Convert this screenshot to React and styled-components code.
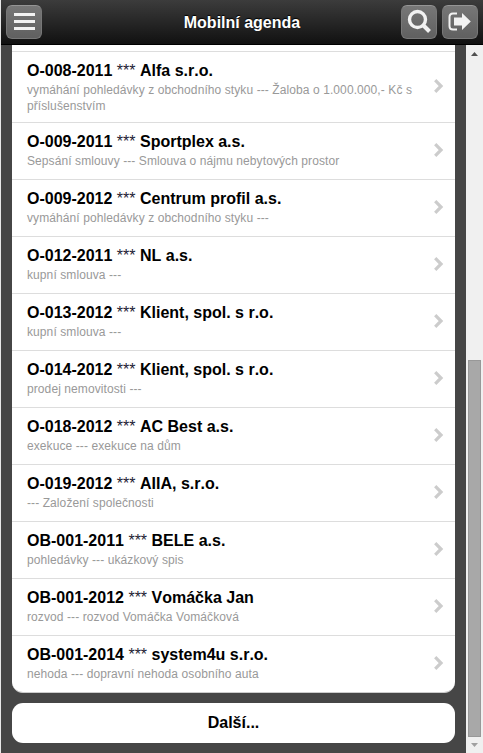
import React from 'react'
import styled, { createGlobalStyle } from 'styled-components';

const GlobalStyle = createGlobalStyle`
*{box-sizing:border-box;}
body{
  margin:0;
  background:#e8e8e8;
  font-family:"Liberation Sans", Arial, sans-serif;
}
`;

const Page = styled.div`
height:753px;
display:flex;
flex-direction:column;
overflow:hidden;
margin-left:1px;
`;

const Header = styled.header`
height:45px;
flex:none;
display:flex;
align-items:flex-start;
gap:5px;
padding:5px;
background:linear-gradient(#3c3c3c, #111);
border-bottom:1px solid #000;
`;

const Title = styled.h1`
flex:1;
margin:0;
padding-left:41px;
text-align:center;
color:#fff;
font-size:16px;
line-height:35px;
text-shadow:0 -1px 1px #000;
`;

const IconButton = styled.button`
width:36px;
height:34px;
padding:0;
border:1px solid #777;
border-top-color:#959595;
border-radius:6px;
background:linear-gradient(#777, #606060);
svg{display:block;}
`;

const Body = styled.div`
flex:1;
min-height:0;
display:flex;
`;

const Content = styled.main`
width:465px;
padding:0 11px;
background:#464646;
`;

const List = styled.ul`
margin:0;
padding:6px 0 0;
list-style:none;
background:#fff;
border-bottom:1px solid #ccc;
border-radius:0 0 11px 11px;
`;

const Row = styled.li`
height:${(p) => (p.$tall ? 71 : 57)}px;
display:flex;
align-items:center;
border-top:1px solid #ddd;
padding:0 10px 0 15px;
svg{margin-bottom:2px;}
`;

const RowText = styled.div`
flex:1;
align-self:flex-start;
padding-top:10px;
`;

const Name = styled.h3`
margin:0;
font-size:16px;
line-height:18px;
font-kerning:none;
color:#000;
white-space:pre;
`;

const Stars = styled.span`
font-weight:normal;
color:#223;
`;

const Note = styled.p`
margin:2px 0 0;
font-size:12px;
line-height:16px;
letter-spacing:0.09px;
color:#999;
white-space:pre;
`;

const More = styled.button`
display:block;
width:100%;
height:40px;
margin-top:10px;
padding:0;
border:0;
border-radius:11px;
background:#fff;
color:#000;
font:bold 16px "Liberation Sans", Arial, sans-serif;
`;

const Scrollbar = styled.div`
width:17px;
padding:0 2px;
display:flex;
flex-direction:column;
background:#f0f0f0;
svg{display:block; flex:none;}
`;

const Track = styled.div`
flex:1;
padding-top:298px;
`;

const Thumb = styled.div`
height:377px;
background:#a8a8a8;
border:1px solid #989898;
`;

const items = [
  { id: 'O-008-2011', name: 'Alfa s.r.o.', note: 'vymáhání pohledávky z obchodního styku --- Žaloba o 1.000.000,- Kč s\npříslušenstvím', tall: true },
  { id: 'O-009-2011', name: 'Sportplex a.s.', note: 'Sepsání smlouvy --- Smlouva o nájmu nebytových prostor' },
  { id: 'O-009-2012', name: 'Centrum profil a.s.', note: 'vymáhání pohledávky z obchodního styku ---' },
  { id: 'O-012-2011', name: 'NL a.s.', note: 'kupní smlouva ---' },
  { id: 'O-013-2012', name: 'Klient, spol. s r.o.', note: 'kupní smlouva ---' },
  { id: 'O-014-2012', name: 'Klient, spol. s r.o.', note: 'prodej nemovitosti ---' },
  { id: 'O-018-2012', name: 'AC Best a.s.', note: 'exekuce --- exekuce na dům' },
  { id: 'O-019-2012', name: 'AIIA, s.r.o.', note: '--- Založení společnosti' },
  { id: 'OB-001-2011', name: 'BELE a.s.', note: 'pohledávky --- ukázkový spis' },
  { id: 'OB-001-2012', name: 'Vomáčka Jan', note: 'rozvod --- rozvod Vomáčka Vomáčková' },
  { id: 'OB-001-2014', name: 'system4u s.r.o.', note: 'nehoda --- dopravní nehoda osobního auta' },
];

const Chevron = () => (
  <svg width="12" height="16" viewBox="0 0 12 16" fill="none" stroke="#ccc" strokeWidth="3.2">
    <path d="M2.2 2.2 8 8l-5.8 5.8" />
  </svg>
);

const App = () => {
  return (
    <>
      <GlobalStyle />
      <Page>
        <Header>
          <IconButton aria-label="Menu">
            <svg width="34" height="32" viewBox="0 0 34 32" fill="#f2f2f2">
              <rect x="7" y="7" width="21" height="3" />
              <rect x="7" y="14" width="21" height="3" />
              <rect x="7" y="21" width="21" height="3" />
            </svg>
          </IconButton>
          <Title>Mobilní agenda</Title>
          <IconButton aria-label="Hledat">
            <svg width="34" height="32" viewBox="0 0 34 32" fill="none" stroke="#f2f2f2">
              <circle cx="15.5" cy="13.5" r="8" strokeWidth="3.4" />
              <path d="m21 19 6.500 6.500" strokeWidth="4" />
            </svg>
          </IconButton>
          <IconButton aria-label="Odhlásit">
            <svg width="34" height="32" viewBox="0 0 34 32" fill="none">
              <path d="M14 7.500h-4Q6.500 7.500 6.500 11v9q0 3.500 3.500 3.500h4" stroke="#f2f2f2" strokeWidth="2" />
              <path d="M11 11.500h8V7l8.800 8.500L19 24v-4.500h-8z" fill="#f2f2f2" />
            </svg>
          </IconButton>
        </Header>
        <Body>
          <Content>
            <List>
              {items.map((item) => (
                <Row key={item.id} $tall={item.tall}>
                  <RowText>
                    <Name>{item.id} <Stars>***</Stars> {item.name}</Name>
                    <Note>{item.note}</Note>
                  </RowText>
                  <Chevron />
                </Row>
              ))}
            </List>
            <More>Další...</More>
          </Content>
          <Scrollbar>
            <svg width="13" height="17" viewBox="0 0 13 17" fill="#505050">
              <path d="M6.500 7 10 11H3z" />
            </svg>
            <Track>
              <Thumb />
            </Track>
            <svg width="13" height="16" viewBox="0 0 13 16" fill="#a0a0a0">
              <path d="M3 6h7l-3.500 4z" />
            </svg>
          </Scrollbar>
        </Body>
      </Page>
    </>
  )
}
export default App
